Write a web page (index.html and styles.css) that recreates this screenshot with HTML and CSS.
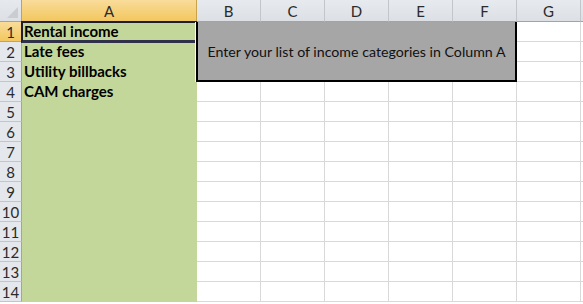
FILE: index.html
```html
<!DOCTYPE html>
<html>
<head>
<meta charset="utf-8">
<link rel="stylesheet" href="styles.css">
</head>
<body>
<div class="sheet">
  <div class="grid">
    <div class="corner"><svg class="tri" width="14" height="14" viewBox="0 0 14 14"><polygon points="13,2 13,13 2,13" fill="#c9ccd1"/></svg></div>
    <div class="colhead sel">A</div>
    <div class="colhead">B</div>
    <div class="colhead">C</div>
    <div class="colhead">D</div>
    <div class="colhead">E</div>
    <div class="colhead">F</div>
    <div class="colhead">G</div>
    <div class="colhead last"></div>

    <div class="rowhead sel">1</div><div class="cell a b">Rental income</div><div class="cell"></div><div class="cell"></div><div class="cell"></div><div class="cell"></div><div class="cell"></div><div class="cell"></div><div class="cell last"></div>
    <div class="rowhead">2</div><div class="cell a b">Late fees</div><div class="cell"></div><div class="cell"></div><div class="cell"></div><div class="cell"></div><div class="cell"></div><div class="cell"></div><div class="cell last"></div>
    <div class="rowhead">3</div><div class="cell a b">Utility billbacks</div><div class="cell"></div><div class="cell"></div><div class="cell"></div><div class="cell"></div><div class="cell"></div><div class="cell"></div><div class="cell last"></div>
    <div class="rowhead">4</div><div class="cell a b">CAM charges</div><div class="cell"></div><div class="cell"></div><div class="cell"></div><div class="cell"></div><div class="cell"></div><div class="cell"></div><div class="cell last"></div>
    <div class="rowhead">5</div><div class="cell a"></div><div class="cell"></div><div class="cell"></div><div class="cell"></div><div class="cell"></div><div class="cell"></div><div class="cell"></div><div class="cell last"></div>
    <div class="rowhead">6</div><div class="cell a"></div><div class="cell"></div><div class="cell"></div><div class="cell"></div><div class="cell"></div><div class="cell"></div><div class="cell"></div><div class="cell last"></div>
    <div class="rowhead">7</div><div class="cell a"></div><div class="cell"></div><div class="cell"></div><div class="cell"></div><div class="cell"></div><div class="cell"></div><div class="cell"></div><div class="cell last"></div>
    <div class="rowhead">8</div><div class="cell a"></div><div class="cell"></div><div class="cell"></div><div class="cell"></div><div class="cell"></div><div class="cell"></div><div class="cell"></div><div class="cell last"></div>
    <div class="rowhead">9</div><div class="cell a"></div><div class="cell"></div><div class="cell"></div><div class="cell"></div><div class="cell"></div><div class="cell"></div><div class="cell"></div><div class="cell last"></div>
    <div class="rowhead">10</div><div class="cell a"></div><div class="cell"></div><div class="cell"></div><div class="cell"></div><div class="cell"></div><div class="cell"></div><div class="cell"></div><div class="cell last"></div>
    <div class="rowhead">11</div><div class="cell a"></div><div class="cell"></div><div class="cell"></div><div class="cell"></div><div class="cell"></div><div class="cell"></div><div class="cell"></div><div class="cell last"></div>
    <div class="rowhead">12</div><div class="cell a"></div><div class="cell"></div><div class="cell"></div><div class="cell"></div><div class="cell"></div><div class="cell"></div><div class="cell"></div><div class="cell last"></div>
    <div class="rowhead">13</div><div class="cell a"></div><div class="cell"></div><div class="cell"></div><div class="cell"></div><div class="cell"></div><div class="cell"></div><div class="cell"></div><div class="cell last"></div>
    <div class="rowhead">14</div><div class="cell a"></div><div class="cell"></div><div class="cell"></div><div class="cell"></div><div class="cell"></div><div class="cell"></div><div class="cell"></div><div class="cell last"></div>
  </div>
  <div class="selection"><span class="handle"></span></div>
  <div class="note">Enter your list of income categories in Column A</div>
</div>
</body>
</html>
```

FILE: styles.css
```css
html, body {
  margin: 0;
  padding: 0;
  background: #ffffff;
  overflow: hidden;
}
.sheet {
  position: relative;
  width: 583px;
  height: 304px;
  overflow: hidden;
  font-family: Lato, "Liberation Sans", sans-serif;
  color: #000;
}
.grid {
  display: grid;
  grid-template-columns: 22px 175px 64px 64px 64px 64px 64px 64px 1fr;
  grid-template-rows: 22px repeat(14, 20px);
}
.grid > div {
  box-sizing: border-box;
}
.corner {
  background: linear-gradient(#e6e9ed, #dcdfe4);
  border-right: 1px solid #9ea4ab;
  border-bottom: 1px solid #9ea4ab;
  position: relative;
}
.tri {
  position: absolute;
  right: 2px;
  bottom: 2px;
}
.colhead {
  background: linear-gradient(#e7eaee, #dcdfe4);
  border-right: 1px solid #c2c6cc;
  border-bottom: 1px solid #9ea4ab;
  display: flex;
  align-items: center;
  justify-content: center;
  font-size: 15px;
  color: #2b2b2b;
  padding-top: 1px;
}
.colhead.sel {
  background: linear-gradient(#f9dc9a, #f3c75e);
  border-right: 1px solid #c9a24a;
  border-bottom: 1px solid #c9a24a;
}
.colhead.last { border-right: none; }
.rowhead {
  background: #e4e7eb;
  border-right: 1px solid #9ea4ab;
  border-bottom: 1px solid #c2c6cc;
  display: flex;
  align-items: center;
  justify-content: center;
  font-size: 15px;
  color: #2b2b2b;
}
.rowhead.sel {
  background: linear-gradient(#f9dc9a, #f3c75e);
  border-bottom: 1px solid #c9a24a;
}
.cell {
  border-right: 1px solid #d9d9d9;
  border-bottom: 1px solid #d9d9d9;
}
.cell.last { border-right: none; }
.cell.a {
  background: #c4d79b;
  border-right: 1px solid #c4d79b;
  border-bottom: 1px solid #c4d79b;
}
.cell.b {
  font-weight: bold;
  font-size: 15px;
  padding-left: 2px;
  display: flex;
  align-items: flex-end;
  line-height: 19px;
  white-space: nowrap;
}
.selection {
  position: absolute;
  left: 21px;
  top: 21px;
  width: 172px;
  height: 17px;
  border: 2px solid #1e1e2e;
  border-bottom: 3px solid #30304a;
}
.handle {
  position: absolute;
  right: -5px;
  bottom: -4px;
  width: 3px;
  height: 3px;
  background: #fff;
  border: 1px solid #30304a;
}
.note {
  position: absolute;
  left: 196px;
  top: 22px;
  width: 321px;
  height: 60px;
  box-sizing: border-box;
  background: #a6a6a6;
  border: 2px solid #000;
  border-top: none;
  box-shadow: -1px 0 0 #ffffff;
  display: flex;
  align-items: center;
  justify-content: center;
  font-size: 14.2px;
  color: #111;
  padding-bottom: 0;
}
```
